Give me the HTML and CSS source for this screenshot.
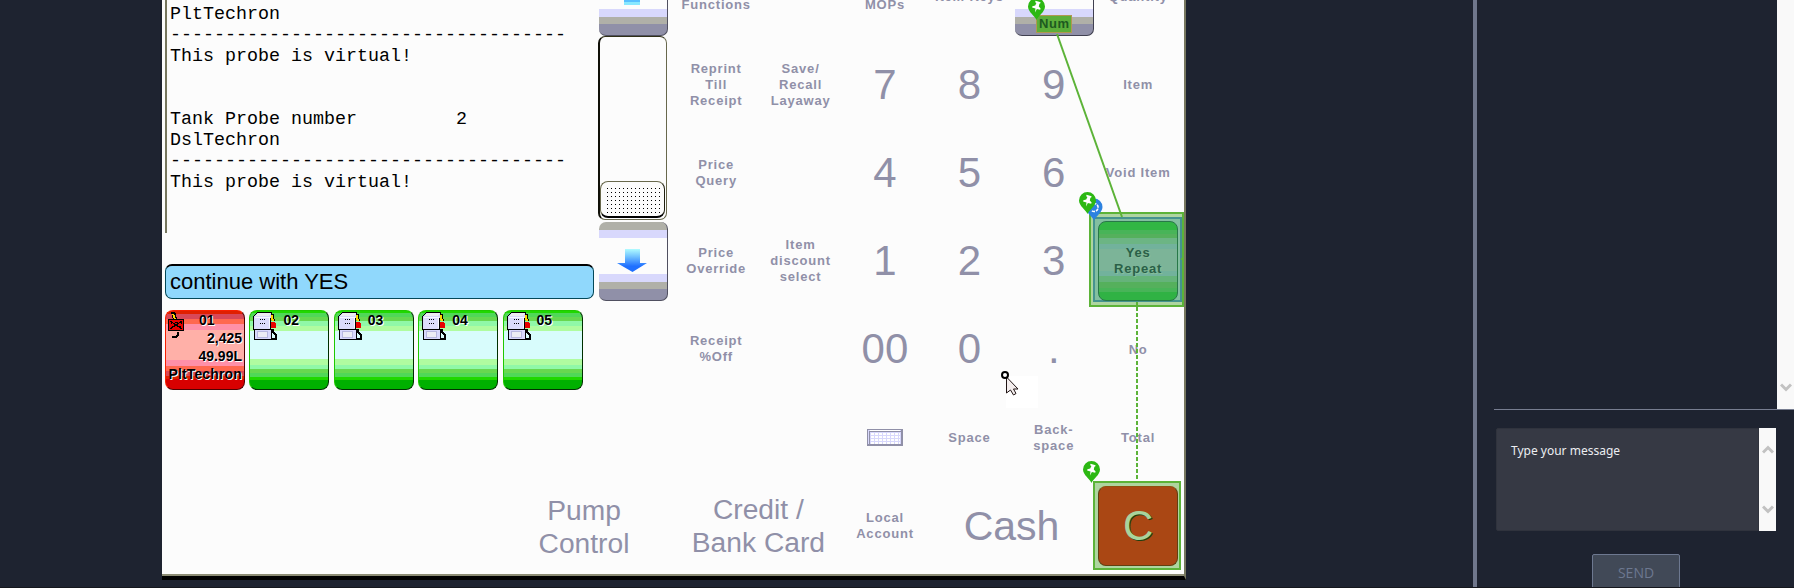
FILE: index.html
```html
<!DOCTYPE html>
<html lang="en">
<head>
<meta charset="utf-8">
<title>Remote till support</title>
<link rel="stylesheet" href="styles.css">
</head>
<body>
<svg class="defs" width="0" height="0" aria-hidden="true">
  <defs>
    <linearGradient id="arrowFill" x1="0" y1="0" x2="0" y2="1">
      <stop offset="0" stop-color="#b0fcff"/><stop offset=".3" stop-color="#78c8ff"/><stop offset=".75" stop-color="#2070ff"/>
    </linearGradient>
    <g id="pump" shape-rendering="crispEdges">
      <path d="M.5 4.500 4.500.5h14v4l-1 3v10H.5z" fill="#d8d8fc" stroke="#000"/>
      <path d="M2 4 5 1h13l-2 3z" fill="#ececf0"/>
      <path d="M2 5h14v12H2z" fill="#dcdcfc"/>
      <path d="M2 5.500h14.500V16" fill="none" stroke="#f8f8ff"/>
      <rect x="1.500" y="17.500" width="17" height="10" fill="#d8d8fc" stroke="#000"/>
      <rect x="4.500" y="19.500" width="10" height="6" fill="#ececf4" stroke="#b8b8e0"/>
      <path d="M7 7.500h5M7 11.500h5" stroke="#000" stroke-dasharray="1 1"/>
      <path d="M19.500 2v4l1.500 3" fill="none" stroke="#000" stroke-width="3"/>
      <path d="M19 3v3l1 3" fill="none" stroke="#fcd800" stroke-width="2"/>
      <path d="M18 10h3l2 2v4h-5z" fill="#e80000"/>
      <path d="M20 17v3l3 3v4h-4" fill="none" stroke="#000" stroke-width="2"/>
    </g>
    <g id="marker">
      <path d="M8.500 22C7 18 0 14 0 8.500a8.500 8.500 0 0 1 17 0C17 14 10 18 8.500 22z"/>
    </g>
    <path id="tack" fill="#fff" d="M7.500 2.800 12.600 4.200 12.200 5.600 11.400 5.800 10.800 8.400 12.600 10.600 12.200 11.800 8.900 10.900 7 14.600 7.500 10.500 4.100 9.600 4.400 8.300 7.200 7.400 8.400 4.900 7.200 4.200z"/>
  </defs>
</svg>

<div class="screen">
  <main class="stage">
    <section class="pos">
      <div class="pos-left">
        <div class="upper">
          <div class="journal">
            <pre class="receipt">PltTechron
------------------------------------
This probe is virtual!


Tank Probe number         2
DslTechron
------------------------------------
This probe is virtual!</pre>
            <div class="prompt">continue with YES</div>
            <div class="pumps">
              <div class="pump pump-alert">
                <svg class="pump-icon" width="20" height="28" viewBox="0 0 20 28" shape-rendering="crispEdges"><path d="M6 0 8 7" stroke="#000" stroke-width="4"/><path d="M6 2 8 7" stroke="#fcd800" stroke-width="2"/><rect x="1.500" y="7.500" width="15" height="11" fill="#e80000" stroke="#000"/><path d="M3 9 15 17M15 9 3 17" fill="none" stroke="#000"/><path d="M4 10v2M14 10v2M5 14h3M11 14h3M8 10h3" stroke="#000"/><path d="M11 20v3l-2 2H5" fill="none" stroke="#000" stroke-width="2"/></svg>
                <span class="pump-no">01</span>
                <span class="pump-val">2,425</span><span class="pump-val">49.99L</span><span class="pump-val pump-grade">PltTechron</span>
              </div>
              <div class="pump"><svg class="pump-icon" width="26" height="30"><use href="#pump"/></svg><span class="pump-no">02</span></div>
              <div class="pump"><svg class="pump-icon" width="26" height="30"><use href="#pump"/></svg><span class="pump-no">03</span></div>
              <div class="pump"><svg class="pump-icon" width="26" height="30"><use href="#pump"/></svg><span class="pump-no">04</span></div>
              <div class="pump"><svg class="pump-icon" width="26" height="30"><use href="#pump"/></svg><span class="pump-no">05</span></div>
            </div>
          </div>
          <div class="scroller">
            <div class="metal metal-top"><svg width="16" height="5"><rect width="16" height="5" fill="#88e8ff"/><rect width="16" height="2" fill="#58c0ff"/></svg></div>
            <div class="track"><div class="thumb"><div class="dots"></div></div></div>
            <div class="metal metal-down"><svg width="30" height="24"><path d="M8 0h15v14h7L15.500 23 0 14h8z" fill="url(#arrowFill)"/></svg></div>
          </div>
        </div>
        <div class="pump-control big">Pump<br>Control</div>
      </div>
      <div class="keypad">
        <div class="key second-line">Functions</div><div class="key"></div><div class="key second-line">MOPs</div><div class="key">Item Keys</div>
        <div class="key"><div class="num-key"><span class="num-label">Num</span></div></div><div class="key">Quantity</div>

        <div class="key">Reprint<br>Till<br>Receipt</div><div class="key">Save/<br>Recall<br>Layaway</div><div class="key digit">7</div><div class="key digit">8</div><div class="key digit">9</div><div class="key">Item</div>

        <div class="key">Price<br>Query</div><div class="key"></div><div class="key digit">4</div><div class="key digit">5</div><div class="key digit">6</div><div class="key">Void Item</div>

        <div class="key">Price<br>Override</div><div class="key">Item<br>discount<br>select</div><div class="key digit">1</div><div class="key digit">2</div><div class="key digit">3</div>
        <div class="key"><div class="yes-key">Yes<br>Repeat</div><div class="halo halo-yes"></div><div class="halo halo-blue"></div></div>

        <div class="key">Receipt<br>%Off</div><div class="key"></div><div class="key digit">00</div><div class="key digit">0</div><div class="key digit">.</div><div class="key lower">No</div>

        <div class="key"></div><div class="key"></div>
        <div class="key"><svg class="keyboard" width="36" height="17" viewBox="0 0 36 17" shape-rendering="crispEdges"><rect width="36" height="17" rx="1" fill="#9090a8"/><rect x="1" y="1" width="33" height="14" fill="#d8d8fc"/><rect x="3" y="1" width="30" height="1" fill="#fff"/><path d="M2.500 2v13M2 2.500h32" stroke="#9090a8"/><path d="M4 4.500h29M4 7.500h29M4 10.500h29M4 13.500h29" stroke="#fff" stroke-width="2" stroke-dasharray="3 1"/></svg></div>
        <div class="key lower">Space</div><div class="key lower">Back-<br>space</div><div class="key lower">Total</div>

        <div class="key big wide lower">Credit /<br>Bank Card</div><div class="key lower">Local<br>Account</div><div class="key digit cash wide lower">Cash</div>
        <div class="key"><div class="c-key">C</div><div class="halo halo-c"></div></div>
      </div>

      <svg class="overlay" width="1024" height="576" viewBox="162 0 1024 576">
        <path d="M1057 34 1122 217" stroke="#5cb338" stroke-width="2"/>
        <path d="M1137 302v9" stroke="#5cb338" stroke-width="2"/>
        <path d="M1137 313v167" stroke="#5cb338" stroke-width="2" stroke-dasharray="4 2"/>
        <path d="M1181 259h4" stroke="#5cb338" stroke-width="2"/>
        <g transform="translate(1085.500 198.500)"><use href="#marker" fill="#2d82e0"/><path d="M8 5a4 4 0 1 1-2 7" fill="none" stroke="#fff" stroke-width="1.600" stroke-dasharray="3 1"/></g>
        <g transform="translate(1079 192)"><use href="#marker" fill="#2cb813"/><use href="#tack"/></g>
        <g transform="translate(1028 -2)"><use href="#marker" fill="#2cb813"/><use href="#tack"/></g>
        <g transform="translate(1083 461)"><use href="#marker" fill="#2cb813"/><use href="#tack"/></g>
        <rect x="1006" y="376" width="32" height="32" fill="#fff"/>
        <path d="M1006.500 377v16l4-3 3 5 2.500-1.500-2.500-4.500h4.500z" fill="#f4eeee" stroke="#201414" stroke-width="1"/>
        <circle cx="1005" cy="375" r="3" fill="#fff" stroke="#000" stroke-width="2"/>
      </svg>
    </section>
  </main>

  <aside class="chat">
    <div class="history"><div class="bar"><svg width="12" height="10"><path d="M1 1.500 6 6.500 11 1.500" fill="none" stroke="#c2c2c2" stroke-width="3"/></svg></div></div>
    <div class="compose">
      <div class="message">Type your message</div>
      <div class="bar bar-both"><svg width="12" height="10"><path d="M1 8.500 6 3.500 11 8.500" fill="none" stroke="#c2c2c2" stroke-width="3"/></svg><svg width="12" height="10"><path d="M1 1.500 6 6.500 11 1.500" fill="none" stroke="#c2c2c2" stroke-width="3"/></svg></div>
    </div>
    <button class="send">SEND</button>
  </aside>
</div>
</body>
</html>
```
FILE: styles.css
```css
* { box-sizing: border-box; }
body { margin: 0; background: #1e2330; overflow: hidden; font-family: "Liberation Sans", Arial, sans-serif; }
.defs { position: absolute; }
.screen { display: flex; height: 588px; overflow: hidden; border-bottom: 1px solid #15171d; }
.stage { width: 1473px; padding-left: 162px; }

.pos { position: relative; display: flex; width: 1024px; height: 580px; overflow: hidden; background: #fcfcfc; border-right: 2px solid #77775f; border-bottom: 4px solid #000; box-shadow: inset 0 -2px #8c8c74; }
.overlay { position: absolute; left: 0; top: 0; z-index: 2; }
.pos-left { width: 512px; flex: none; }
.upper { display: flex; height: 481px; padding-left: 3px; }
.journal { width: 433px; }
.receipt { margin: 0; height: 233px; padding: 4px 0 0 3px; border-left: 2px solid #77775f; font: 18.330px/21px "Liberation Mono", "Courier New", monospace; color: #000; }
.prompt { width: 429px; height: 35px; margin-top: 31px; padding-left: 4px; border: 1px solid #044858; border-top: 2px solid #000; border-radius: 7px; background: #90d8fc; font-size: 22px; line-height: 32px; color: #000; }
.pumps { display: flex; gap: 4.400px; margin-top: 11px; }
.pump {
  position: relative; display: flex; flex-direction: column; width: 80px; height: 80px; padding: 2px 2px 0 0; flex: none;
  border: 1px solid #20c800; border-right-color: #003000; border-bottom-color: #003000; border-radius: 8px;
  background: linear-gradient(#20d800 0 2px, #50d858 2px 6px, #68d850 6px 10px, #90f8a8 10px 15px, #b0fca0 15px 20px, #d8fcfc 20px 48px, #b0fca0 48px 54px, #90f8a8 54px 58px, #68d850 58px 62px, #50d858 62px 66px, #20d800 66px 69px, #00b000 69px);
  font-size: 14px; font-weight: bold; line-height: 18px; color: #000; text-shadow: 1px 1px #fff; }
.pump-alert {
  border-color: #f82000 #500000 #500000 #f82000;
  background: linear-gradient(#e02000 0 3px, #d84858 3px 8px, #ff6850 8px 13px, #ff90a8 13px 19px, #ffb0a8 19px 49px, #ff90a8 49px 55px, #ff6850 55px 60px, #d84858 60px 65px, #e02000 65px 68px, #d80000 68px); }
.pump-icon { position: absolute; left: 3px; top: 1px; }
.pump-alert .pump-icon { left: 1px; }
.pump-no { padding-left: 33px; line-height: 14px; margin-bottom: 2px; }
.pump-val { align-self: flex-end; }
.pump-grade { letter-spacing: .15px; }

.scroller { width: 70px; padding-left: 1px; }
.metal { display: flex; justify-content: center; width: 69px; border: solid #505060; border-width: 0 1px 1px 0; border-radius: 7px; padding-right: 2px; }
.metal-top { height: 36px; border-radius: 0 0 7px 7px; background: linear-gradient(#fcfcfc 0 9px, #d8d8fc 9px 17px, #b0b0a8 17px 24px, #9090a8 24px); }
.metal-down { height: 79px; margin-top: 2px; padding-top: 27px; background: linear-gradient(#b0b0a8 0 8px, #d8d8fc 8px 16px, #fcfcfc 16px 52px, #d8d8fc 52px 60px, #b0b0a8 60px 67px, #9090a8 67px); }
.track { display: flex; align-items: flex-end; width: 69px; height: 184px; margin-left: -1px; padding: 0 1px 1px 0; border: 1px solid #68684c; border-left: 2px solid #101008; border-top-color: #303018; border-radius: 7px; }
.thumb { width: 100%; height: 37px; padding: 5px 6px; border: 1px solid #68684c; border-right: 1px solid #202010; border-bottom: 2px solid #000; border-radius: 8px; }
.dots { width: 54px; height: 26px; background: conic-gradient(from 90deg at 3px 3px, #000 90deg, transparent 0) -3px -2px / 4px 4px; }
.pump-control { display: flex; align-items: center; width: 140px; height: 91px; margin-left: 352px; justify-content: center; text-align: center; }
.big { font-size: 28.200px; line-height: 33px; color: #9090a8; }

.keypad { display: grid; grid-template-columns: repeat(6, 84.400px); grid-auto-rows: 88px; margin-top: -47px; }
.key { position: relative; display: flex; align-items: center; justify-content: center; text-align: center; font-size: 13px; font-weight: bold; line-height: 16px; letter-spacing: .8px; color: #9090a8; white-space: nowrap; }
.key.lower { padding-top: 2px; }
.second-line { padding-top: 16px; }
.key.big, .key.digit { font-weight: normal; letter-spacing: 0; }
.key.big { font-size: 28.200px; line-height: 33px; }
.key.digit { font-size: 42px; line-height: 44px; }
.key.cash { font-size: 41px; }
.wide { grid-column: span 2; }
.num-key { display: flex; align-items: flex-end; justify-content: center; width: 79px; height: 79px; margin: -1px -2px 0 0; padding-bottom: 2px; border: solid #404050; border-width: 0 1px 1px 0; border-radius: 7px; background: linear-gradient(#fcfcfc 52px, #d8d8fc 52px 60px, #b0b0a8 60px 67px, #9090a8 67px); }
.num-label { width: 36px; height: 18px; border: 1px solid #b09850; background: #5cae3a; color: #1d5a20; line-height: 16px; letter-spacing: .5px; }
.yes-key { display: grid; place-content: center; width: 80px; height: 80px; border: 1px solid #287848; border-radius: 8px; color: #2a6048; text-shadow: 1px 1px #88c098; background: linear-gradient(#32b644 0 8px, #48b458 8px 12px, #55b05c 12px 16px, #6cb584 16px 22px, #72b29c 22px 27px, #7cb498 27px 49px, #72b29c 49px 54px, #65b37a 54px 60px, #55b05c 60px 66px, #48b458 66px 70px, #30b244 70px); z-index: 1; }
.c-key { display: grid; place-content: center; width: 80px; height: 80px; margin-top: 2px; border: 1px solid #604010; border-top-color: #905010; border-radius: 8px; background: #aa4714; color: #a8d49c; font-size: 42px; font-weight: normal; line-height: 44px; text-shadow: 1px 1px #204010; letter-spacing: 0; z-index: 1; }
.halo { position: absolute; border: 2px solid #5cb338; background: #aed5a0; }
.halo-yes { left: -7px; top: -5px; width: 95px; height: 95px; }
.halo-blue { left: -3px; top: 0; width: 89px; height: 85px; border-color: #45938f; background: #83bfa0; }
.halo-c { left: -3px; top: 0; width: 88px; height: 89px; }

.chat { display: flex; flex-direction: column; width: 321px; border-left: 4px solid #70778c; padding-left: 17px; }
.history { display: flex; flex: none; justify-content: flex-end; height: 410px; border-bottom: 1px solid #777d90; }
.bar { display: flex; flex-direction: column; justify-content: flex-end; align-items: center; width: 17px; padding-bottom: 16px; background: #f9f9f9; }
.compose { display: flex; flex: none; width: 280px; height: 103px; margin: 18px 0 0 2px; }
.message { flex: 1; padding: 13px 14px; background: #363944; border: 1px solid #30333d; border-radius: 2px 0 0 2px; color: #eceef2; font: 12px/18px "Noto Sans", "Open Sans", sans-serif; }
.bar-both { justify-content: space-between; padding: 16px 0; }
.send { width: 88px; height: 38px; margin: 23px 0 0 98px; padding: 0; flex: none; border: 1px solid #6d7890; border-radius: 2px; background: #414957; color: #6d7890; font: 14px/36px "Open Sans", sans-serif; }
```
